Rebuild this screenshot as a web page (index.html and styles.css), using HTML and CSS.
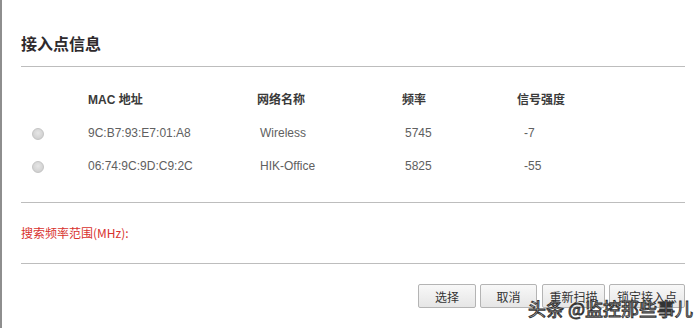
FILE: index.html
```html
<!DOCTYPE html>
<html lang="zh">
<head>
<meta charset="utf-8">
<title>接入点信息</title>
<link rel="stylesheet" href="styles.css">
</head>
<body>
<div class="page">
  <h1 class="title">接入点信息</h1>
  <div class="rule"></div>
  <div class="table">
    <div class="row head">
      <span class="cell radio-cell"></span>
      <span class="cell">MAC 地址</span>
      <span class="cell">网络名称</span>
      <span class="cell">频率</span>
      <span class="cell">信号强度</span>
    </div>
    <div class="row">
      <span class="cell radio-cell"><span class="radio"></span></span>
      <span class="cell">9C:B7:93:E7:01:A8</span>
      <span class="cell shift">Wireless</span>
      <span class="cell shift">5745</span>
      <span class="cell shift2">-7</span>
    </div>
    <div class="row">
      <span class="cell radio-cell"><span class="radio"></span></span>
      <span class="cell">06:74:9C:9D:C9:2C</span>
      <span class="cell shift">HIK-Office</span>
      <span class="cell shift">5825</span>
      <span class="cell shift2">-55</span>
    </div>
  </div>
  <div class="rule rule-mid"></div>
  <p class="range">搜索频率范围(MHz):</p>
  <div class="rule rule-low"></div>
  <div class="actions">
    <button class="btn btn-a">选择</button>
    <button class="btn btn-b">取消</button>
    <button class="btn btn-c">重新扫描</button>
    <button class="btn btn-d">锁定接入点</button>
  </div>
  <div class="watermark">头条 @监控那些事儿</div>
</div>
</body>
</html>
```

FILE: styles.css
```css
* { box-sizing: border-box; }
html, body { margin: 0; padding: 0; background: #fff; }
body {
  font-family: "Liberation Sans", "Noto Sans CJK SC", Arial, sans-serif;
  font-size: 12px;
  color: #606060;
}
.page {
  position: relative;
  width: 700px;
  height: 328px;
  border-left: 2px solid #8e8e8e;
  overflow: hidden;
}
.title {
  margin: 33px 0 0 19px;
  font-family: "Noto Sans CJK SC", sans-serif;
  font-size: 16px;
  line-height: 20px;
  font-weight: 700;
  color: #2e2a2c;
}
.rule {
  margin: 13px 15px 0 19px;
  height: 1px;
  background: #bdbdbd;
}
.table { margin-top: 17px; }
.row {
  display: grid;
  grid-template-columns: 86px 169px 145px 115px 1fr;
  height: 33px;
  align-items: center;
}
.cell { line-height: 33px; white-space: nowrap; }
.head .cell {
  font-family: "Liberation Sans", "Noto Sans CJK SC", sans-serif;
  font-weight: bold;
  color: #3a3a3a;
}
.shift { padding-left: 3px; }
.shift2 { padding-left: 7px; }
.radio-cell { display: flex; align-items: center; }
.radio {
  display: block;
  width: 12px;
  height: 12px;
  margin-left: 30px;
  border-radius: 50%;
  border: 1px solid #c4c4c4;
  background: radial-gradient(circle at 50% 40%, #e6e6e6 0%, #d2d2d2 70%, #c8c8c8 100%);
}
.rule-mid { margin-top: 19px; }
.range {
  margin: 20px 0 0 19px;
  line-height: 20px;
  color: #d8322e;
  font-family: "Noto Sans CJK SC", sans-serif;
  font-size: 12px;
}
.rule-low { margin-top: 20px; }
.actions {
  display: flex;
  justify-content: flex-end;
  gap: 4px;
  margin: 20px 15px 0 0;
}
.btn {
  height: 24px;
  padding: 0;
  border: 1px solid #b4b4b4;
  border-radius: 2px;
  background: linear-gradient(#f8f8f8, #e6e6e6);
  font-family: "Noto Sans CJK SC", sans-serif;
  font-size: 12px;
  color: #333;
}
.btn-a { width: 58px; }
.btn-b { width: 57px; }
.btn-c { width: 63px; margin-left: 1px; }
.btn-d { width: 76px; }
.watermark {
  position: absolute;
  left: 526px;
  top: 296px;
  font-family: "Noto Sans CJK SC", sans-serif;
  font-size: 18px;
  line-height: 24px;
  color: #fff;
  white-space: nowrap;
  -webkit-text-stroke: 1px #333;
}
```
